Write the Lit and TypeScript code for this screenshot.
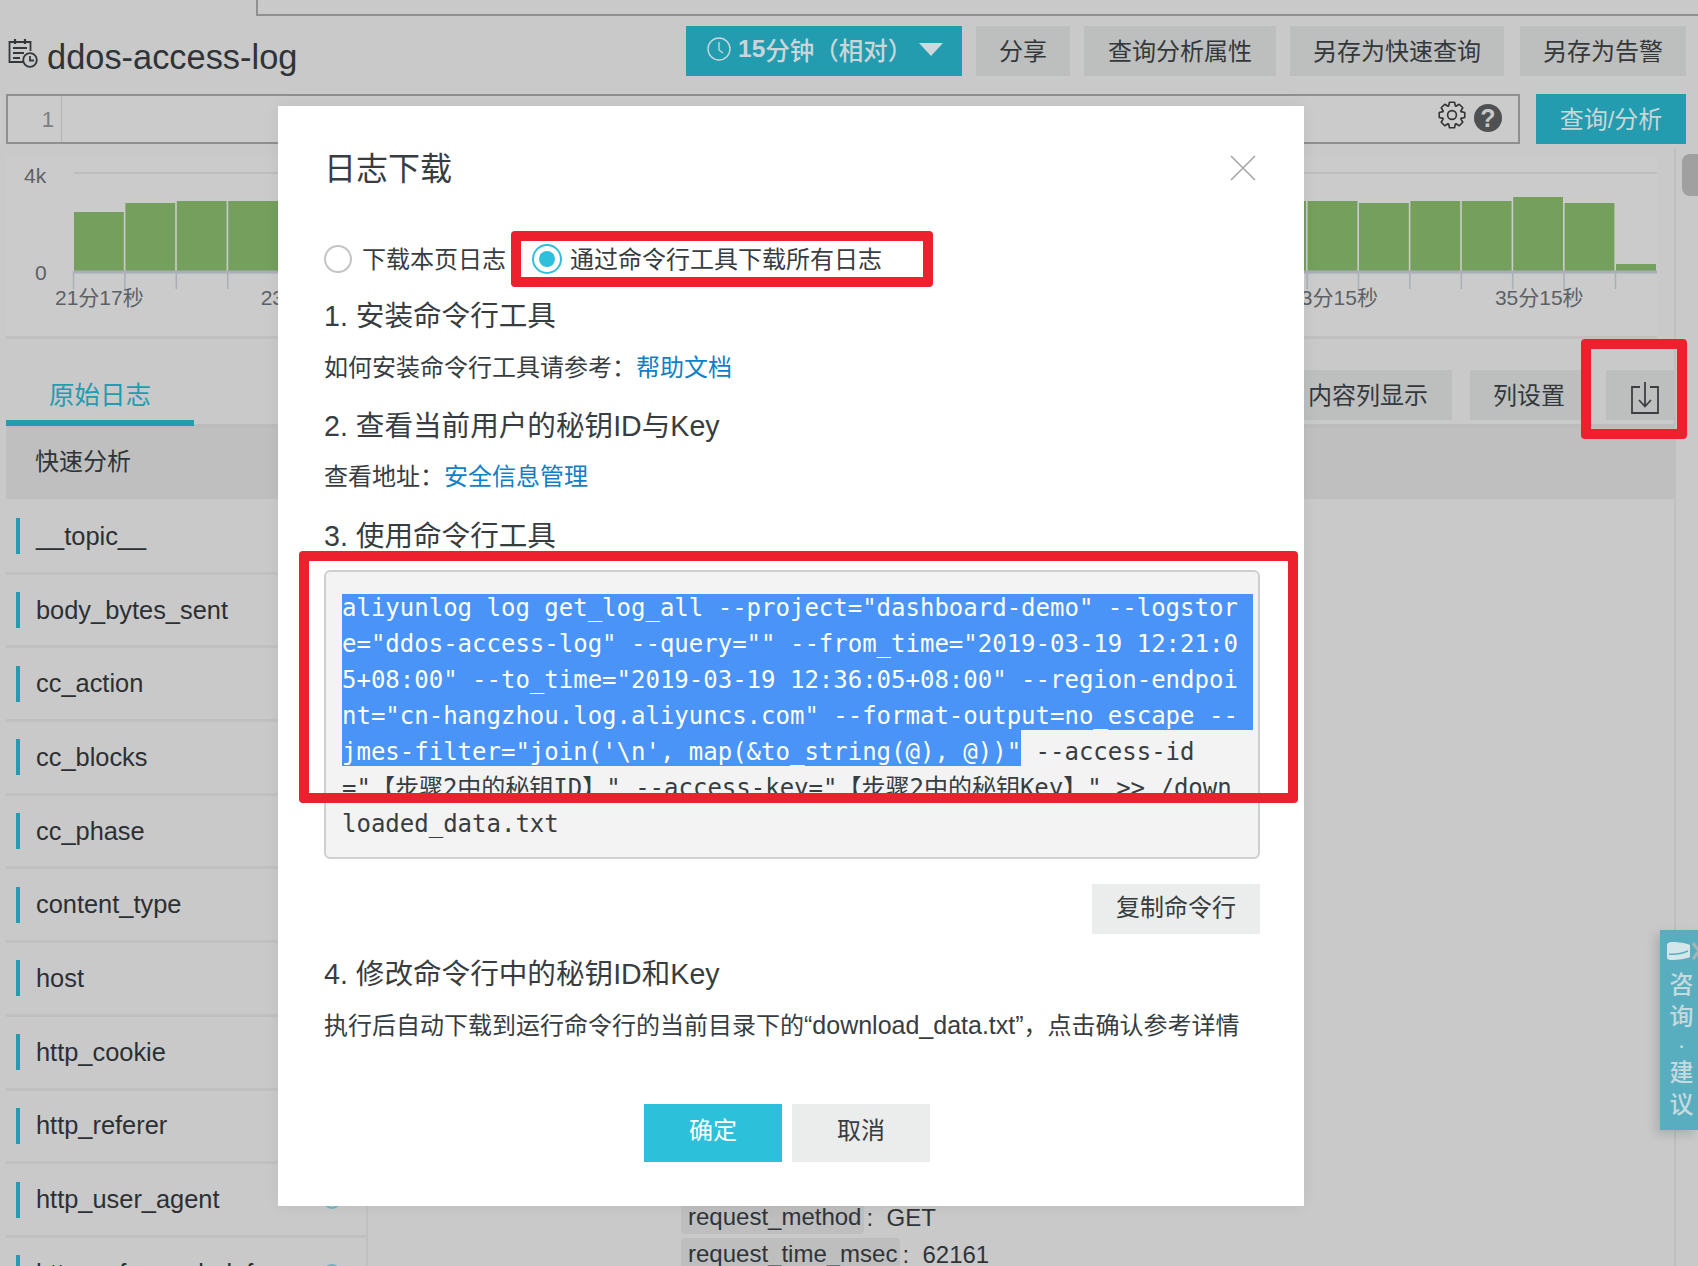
import { LitElement, html, css, svg } from "lit";
import { customElement } from "lit/decorators.js";

const FIELDS = ["__topic__", "body_bytes_sent", "cc_action", "cc_blocks", "cc_phase", "content_type", "host", "http_cookie", "http_referer", "http_user_agent", "http_x_forwarded_for"];
const BAR_TOPS = [212, 203, 201, 201, ...Array(20).fill(201), 201, 203, 201, 201, 197, 203, 264];
const TIME_LABELS: [number, string][] = [[0, "21分17秒"], [1, "23分"], [6, "33分15秒"], [7, "35分15秒"]];

function gearPath(cx: number, cy: number, outer: number, inner: number, teeth: number) {
  const pts: string[] = [];
  const step = (Math.PI * 2) / teeth;
  for (let i = 0; i < teeth; i++) {
    const a = i * step - Math.PI / 2;
    const offs: [number, number][] = [[-0.5, inner], [-0.27, outer], [0.27, outer], [0.5, inner]];
    for (const [o, r] of offs) {
      const t = a + o * step * 0.92;
      pts.push(`${(cx + Math.cos(t) * r).toFixed(2)} ${(cy + Math.sin(t) * r).toFixed(2)}`);
    }
  }
  return "M" + pts.join("L") + "Z";
}

@customElement("app-root")
export class AppRoot extends LitElement {
  static styles = css`
    :host { display: block; width: 1698px; height: 1266px; overflow: hidden; position: relative; background: #c9c9c9;
      font-family: "Liberation Sans", "Noto Sans CJK SC", sans-serif; color: #2f3438; }
    * { box-sizing: border-box; }
    .page { display: flex; flex-direction: column; height: 1266px; }
    .strip { height: 16px; margin-left: 256px; border-left: 2px solid #8f8f8f; border-bottom: 2px solid #8f8f8f; flex: none; }
    .header { display: flex; align-items: center; height: 50px; margin-top: 10px; padding: 0 12px 0 8px; gap: 14px; flex: none; }
    .title-icon { width: 30px; height: 30px; margin-top: 4px; flex: none; }
    .title { font-size: 34.4px; margin-left: -5px; padding-top: 6px; flex: 1; line-height: 50px; height: 50px; }
    .btn { height: 50px; display: flex; align-items: center; justify-content: center; background: #bdbfbf; font-size: 24px; flex: none; color: #34383b; padding-bottom: 4px; }
    .w-share { width: 94px; }
    .w-attr { width: 192px; }
    .w-quick { width: 214px; margin-right: 2px; }
    .w-alert { width: 166px; }
    .time { width: 276px; background: #239cb0; color: #c9d6d9; justify-content: flex-start; padding-left: 21px; font-weight: 500; font-size: 24.5px; }
    .time b { font-weight: 700; }
    .time svg { width: 24px; height: 24px; margin-right: 7px; flex: none; }
    .tri { width: 0; height: 0; border-left: 12px solid transparent; border-right: 12px solid transparent; border-top: 13px solid #cdd9dc; margin-left: 7px; }
    .query { display: flex; height: 50px; margin-top: 18px; padding: 0 12px 0 6px; gap: 16px; flex: none; }
    .qbox { flex: 1; border: 2px solid #8f8f8f; display: flex; align-items: center; padding-right: 16px; background: #cbcbcb; }
    .gutter { width: 54px; align-self: stretch; border-right: 1px solid #b4b4b4; text-align: right; padding-right: 7px; font-size: 22px; line-height: 48px; color: #7e7e7e; }
    .tools { margin-left: auto; display: flex; align-items: center; gap: 8px; }
    .gear { width: 28px; height: 28px; margin-bottom: 8px; }
    .help { width: 28px; height: 28px; border-radius: 50%; background: #4e5052; color: #c9c9c9; font-size: 25px; font-weight: 700; line-height: 28px; text-align: center; margin-bottom: 3px; }
    .primary { background: #239cb0; color: #c9d6d9; width: 150px; }
    .chart { margin: 12px 0 0 6px; width: 1651px; height: 183px; background: #cbcbcb; border-bottom: 3px solid #c0c0c0; flex: none; }
    .chart svg { display: block; }
    .chart text { font-family: "Liberation Sans", "Noto Sans CJK SC", sans-serif; fill: #5c6166; }
    .tabs { display: flex; align-items: flex-end; width: 1669px; height: 89px; margin-left: 6px; border-bottom: 4px solid #bcbcbc; flex: none; }
    .tab { width: 188px; height: 56px; margin-bottom: -2px; border-bottom: 6px solid #239cb0; color: #239cb0; font-size: 25.5px; display: flex; align-items: center; justify-content: center; padding-bottom: 5px; }
    .spacer { flex: 1; }
    .tabs .btn { margin-bottom: 4px; }
    .w-content { width: 168px; margin-right: 18px; }
    .w-cols { width: 118px; margin-right: 18px; }
    .tabs .w-dl { width: 69px; padding: 0; }
    .w-dl svg { width: 28px; height: 32px; margin: 6px 0 0 9px; }
    .quick { width: 1669px; margin-left: 6px; height: 71px; background: #bfbfbf; display: flex; align-items: center; padding: 0 0 9px 29px; font-size: 24px; flex: none; }
    .main { display: flex; margin-left: 6px; flex: 1; min-height: 0; }
    .list { width: 362px; border-right: 2px solid #c0c0c0; flex: none; padding-top: 2px; }
    .row { height: 73.7px; border-bottom: 3px solid #c0c0c0; display: flex; align-items: center; padding: 0 25px 0 10px; gap: 16px; font-size: 25.4px; color: #2c3034; }
    .row i { width: 4px; height: 36px; background: #239cb0; flex: none; }
    .row b { margin-left: auto; width: 18px; height: 18px; border: 2px solid #6db4c2; border-radius: 50%; flex: none; }
    .detail { padding: 702px 0 0 313px; display: flex; flex-direction: column; gap: 4px; font-size: 24px; }
    .kv { display: flex; align-items: center; height: 33px; white-space: pre; }
    .chip { background: #bebebe; border-radius: 4px; padding: 0 3px 0 7px; height: 33px; line-height: 32px; }
    .val { padding-left: 2px; }
    .track { position: absolute; left: 1674px; top: 148px; bottom: 0; width: 2px; background: #bfbfbf; }
    .thumb { position: absolute; left: 1682px; top: 154px; width: 24px; height: 42px; border-radius: 8px; background: #a0a0a0; }
    .float { position: absolute; left: 1660px; top: 930px; width: 38px; height: 200px; background: #58aebf; box-shadow: -4px 4px 10px rgba(0,0,0,.14); display: flex; flex-direction: column; align-items: center; padding: 12px 0 0 5px; color: #c5dadf; font-size: 24px; line-height: 32px; font-weight: 500; overflow: hidden; }
    .float svg { width: 32px; height: 18px; margin: 0 0 9px 0; flex: none; }
    .float .dot { height: 24px; line-height: 24px; }
    .modal { position: absolute; left: 278px; top: 106px; width: 1026px; height: 1100px; background: #fff; padding: 0 44px 0 46px; color: #373d41; box-shadow: 0 0 14px rgba(0,0,0,.06); display: flex; flex-direction: column; }
    .m-head { height: 125px; display: flex; align-items: center; justify-content: space-between; flex: none; padding: 0 0 1px 0; }
    .m-head h2 { font-size: 32px; font-weight: 400; margin: 0 0 4px 0; }
    .close { width: 26px; height: 26px; margin-right: 4px; }
    .radios { height: 56px; display: flex; align-items: center; font-size: 24px; flex: none; }
    .radio { width: 28px; height: 28px; border-radius: 50%; border: 2px solid #c4c4c4; margin-right: 10px; flex: none; display: flex; align-items: center; justify-content: center; }
    .radio.on { width: 30px; height: 30px; margin: 0 8px 0 1px; border-color: #2dc0db; }
    .radio.on::after { content: ""; width: 16px; height: 16px; border-radius: 50%; background: #2dc0db; }
    .lbl { padding-bottom: 4px; }
    .radio-label { width: 169px; }
    h3 { font-size: 28.6px; font-weight: 400; line-height: 40px; margin: 0; flex: none; }
    .h1 { margin-top: 9px; }
    .h2 { margin-top: 20px; }
    .h3 { margin-top: 21px; }
    .h4 { margin-top: 20px; }
    p { font-size: 24px; line-height: 36px; margin: 0; flex: none; white-space: nowrap; }
    p span { font-size: 25px; }
    .p1 { margin-top: 14px; }
    .p2 { margin-top: 13px; }
    .p4 { margin-top: 13px; }
    a { color: #0f7fc7; text-decoration: none; }
    .code { margin-top: 14px; width: 936px; height: 289px; background: #f3f3f3; border: 2px solid #cfcfcf; border-radius: 6px; padding: 18px 0 0 16px; font-family: "DejaVu Sans Mono", "Noto Sans CJK SC", monospace; font-size: 24px; line-height: 36px; flex: none; overflow: hidden; }
    .ln { height: 36px; width: 911px; white-space: pre; }
    .ln.s { background: #4a94f8; color: #fff; }
    .ln.first { background: linear-gradient(transparent 4px, #4a94f8 4px); }
    .ln.fourth { background: linear-gradient(#4a94f8 32px, transparent 32px); }
    .sel5 { display: inline-block; height: 32px; background: #4a94f8; color: #fff; box-shadow: 0 -4px 0 #4a94f8; vertical-align: top; }
    .copy { align-self: flex-end; margin-top: 25px; width: 168px; background: #ebecec; color: #373d41; padding-bottom: 8px; }
    .foot { margin: 60px 0 0 320px; display: flex; gap: 10px; flex: none; }
    .foot .btn { width: 138px; height: 58px; padding-bottom: 9px; }
    .foot .cancel { background: #ebecec; color: #373d41; }
    .foot .ok { background: #2dc0db; color: #fff; }
    .mark { position: absolute; border: 10px solid #ed202e; border-radius: 4px; pointer-events: none; }
    .mark.radio-mark { left: 233px; top: 125px; width: 422px; height: 56px; }
    .mark.code-mark { left: 21px; top: 445px; width: 999px; height: 252px; }
    .mark.dl-mark { left: 1581px; top: 339px; width: 106px; height: 100px; }
  `;

  private chart() {
    const bars = BAR_TOPS.map((top, i) => {
      const x = 74 + i * 51.4;
      const w = i === 30 ? 40 : 49.8;
      return svg`<rect x=${x} y=${top} width=${w} height=${271 - top} fill="#749f5c"></rect>
        <line x1=${x - 0.5} x2=${x - 0.5} y1="271" y2="289" stroke="#a9aeb8" stroke-width="1.5"></line>`;
    });
    return html`<svg width="1651" height="180" viewBox="6 156 1651 180">
      <line x1="74" x2="1657" y1="173" y2="173" stroke="#bdbdbd" stroke-width="2"></line>
      ${bars}
      <line x1="74" x2="1657" y1="272" y2="272" stroke="#a9aeb8" stroke-width="3"></line>
      <text x="24" y="183" font-size="21">4k</text>
      <text x="35" y="280" font-size="21">0</text>
      ${TIME_LABELS.map(([i, t]) => svg`<text x=${55 + i * 205.7} y="305" font-size="21">${t}</text>`)}
    </svg>`;
  }

  render() {
    return html`
      <div class="page">
        <div class="strip"></div>
        <div class="header">
          <svg class="title-icon" viewBox="0 0 30 30" fill="none" stroke="#33383c" stroke-width="1.8">
            <path d="M16 24H1.5V4H22.5V13"></path><path d="M7 1V6M17 1V6" stroke-width="2.2"></path>
            <path d="M5 10H19M5 15H16M5 20H12"></path>
            <circle cx="22" cy="22" r="6.8" fill="#c9c9c9"></circle><path d="M22 18V22.5H26"></path>
          </svg>
          <div class="title">ddos-access-log</div>
          <div class="btn time">
            <svg viewBox="0 0 24 24" fill="none" stroke="#c9d6d9" stroke-width="1.4"><circle cx="12" cy="12" r="11"></circle><path d="M12 5V13L16 16"></path></svg>
            <b>15</b>分钟（相对）<span class="tri"></span>
          </div>
          <div class="btn w-share">分享</div>
          <div class="btn w-attr">查询分析属性</div>
          <div class="btn w-quick">另存为快速查询</div>
          <div class="btn w-alert">另存为告警</div>
        </div>
        <div class="query">
          <div class="qbox">
            <div class="gutter">1</div>
            <div class="tools">
              <svg class="gear" viewBox="0 0 28 28" fill="none" stroke="#333" stroke-width="1.6" stroke-linejoin="round">
                <path d=${gearPath(14, 14, 13, 9.6, 8)}></path><circle cx="14" cy="14" r="4.4"></circle>
              </svg>
              <div class="help">?</div>
            </div>
          </div>
          <div class="btn primary">查询/分析</div>
        </div>
        <div class="chart">${this.chart()}</div>
        <div class="tabs">
          <div class="tab">原始日志</div>
          <div class="spacer"></div>
          <div class="btn w-content">内容列显示</div>
          <div class="btn w-cols">列设置</div>
          <div class="btn w-dl">
            <svg viewBox="0 0 28 32" fill="none" stroke="#3c3f42" stroke-width="1.8">
              <path d="M9 5H1V31H27V5H19"></path><path d="M14 0V24M8 18L14 24.5L20 18"></path>
            </svg>
          </div>
        </div>
        <div class="quick">快速分析</div>
        <div class="main">
          <div class="list">
            ${FIELDS.map((f, i) => html`<div class="row"><i></i><span>${f}</span>${i >= 9 ? html`<b></b>` : ""}</div>`)}
          </div>
          <div class="detail">
            <div class="kv"><span class="chip">request_method</span><span class="val">:  GET</span></div>
            <div class="kv"><span class="chip">request_time_msec</span><span class="val">:  62161</span></div>
          </div>
        </div>
      </div>
      <div class="track"></div>
      <div class="thumb"></div>
      <div class="float">
        <svg viewBox="0 0 32 18">
          <path d="M1 3C1 1 3 0 6 0C13 0 20 1 24 3V15C20 17 12 18 5 18C2 18 1 17 1 15Z" fill="#d3e6ea"></path>
          <path d="M3 12C10 13 17 11 22 9" stroke="#58aebf" stroke-width="1.5" fill="none"></path>
          <path d="M27 1L33 9L27 17" stroke="#a9b3b5" stroke-width="3" fill="none"></path>
        </svg>
        <span>咨</span><span>询</span><span class="dot">·</span><span>建</span><span>议</span>
      </div>
      <div class="modal">
        <div class="m-head">
          <h2>日志下载</h2>
          <svg class="close" viewBox="0 0 26 26" stroke="#a6a6a6" stroke-width="1.6"><path d="M1 1L25 25M25 1L1 25"></path></svg>
        </div>
        <div class="radios">
          <span class="radio"></span><span class="radio-label lbl">下载本页日志</span>
          <span class="radio on"></span><span class="lbl">通过命令行工具下载所有日志</span>
        </div>
        <h3 class="h1">1. 安装命令行工具</h3>
        <p class="p1">如何安装命令行工具请参考：<a>帮助文档</a></p>
        <h3 class="h2">2. 查看当前用户的秘钥ID与Key</h3>
        <p class="p2">查看地址：<a>安全信息管理</a></p>
        <h3 class="h3">3. 使用命令行工具</h3>
        <div class="code">
          <div class="ln s first">aliyunlog log get_log_all --project="dashboard-demo" --logstor</div>
          <div class="ln s">e="ddos-access-log" --query="" --from_time="2019-03-19 12:21:0</div>
          <div class="ln s">5+08:00" --to_time="2019-03-19 12:36:05+08:00" --region-endpoi</div>
          <div class="ln s fourth">nt="cn-hangzhou.log.aliyuncs.com" --format-output=no_escape --</div>
          <div class="ln"><span class="sel5">jmes-filter="join('\\n', map(&to_string(@), @))"</span> --access-id</div>
          <div class="ln">="【步骤2中的秘钥ID】" --access-key="【步骤2中的秘钥Key】" >> /down</div>
          <div class="ln">loaded_data.txt</div>
        </div>
        <div class="btn copy">复制命令行</div>
        <h3 class="h4">4. 修改命令行中的秘钥ID和Key</h3>
        <p class="p4">执行后自动下载到运行命令行的当前目录下的<span>“download_data.txt”</span>，点击确认参考详情</p>
        <div class="foot">
          <div class="btn ok">确定</div>
          <div class="btn cancel">取消</div>
        </div>
        <div class="mark radio-mark"></div>
        <div class="mark code-mark"></div>
      </div>
      <div class="mark dl-mark"></div>
    `;
  }
}
